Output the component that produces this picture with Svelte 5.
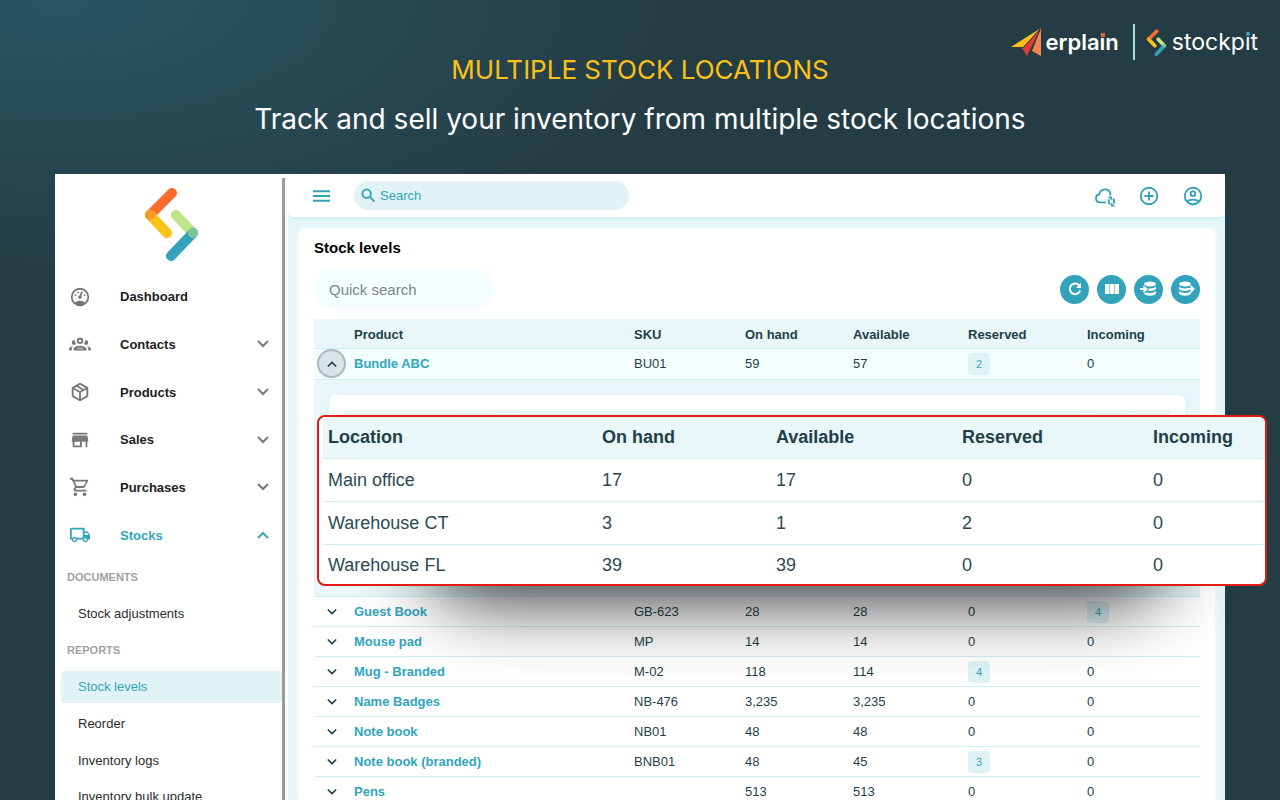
<script lang="ts">
  type Product = {
    name: string;
    sku: string;
    onHand: string;
    available: string;
    reserved: number;
    incoming: number;
    open?: boolean;
  };

  const icons = {
    gauge: 'M12 2A10 10 0 0 0 2 12A10 10 0 0 0 12 22A10 10 0 0 0 22 12A10 10 0 0 0 12 2M12 4A8 8 0 0 1 20 12C20 14.4 19 16.5 17.3 18C15.9 16.7 14 16 12 16C10 16 8.2 16.7 6.7 18C5 16.5 4 14.4 4 12A8 8 0 0 1 12 4M14 5.89C13.62 5.9 13.26 6.15 13.1 6.54L11.81 9.77L11.71 10C11 10.13 10.41 10.6 10.14 11.26C9.73 12.29 10.23 13.45 11.26 13.86C12.29 14.27 13.45 13.77 13.86 12.74C14.12 12.08 14 11.32 13.57 10.76L13.67 10.5L14.96 7.29C15.17 6.75 14.92 6.17 14.41 5.96C14.28 5.91 14.15 5.89 14 5.89M10 6A1 1 0 0 0 9 7A1 1 0 0 0 10 8A1 1 0 0 0 11 7A1 1 0 0 0 10 6M7 9A1 1 0 0 0 6 10A1 1 0 0 0 7 11A1 1 0 0 0 8 10A1 1 0 0 0 7 9M17 9A1 1 0 0 0 16 10A1 1 0 0 0 17 11A1 1 0 0 0 18 10A1 1 0 0 0 17 9Z',
    group: 'M12 5A3.5 3.5 0 0 0 8.5 8.5A3.5 3.5 0 0 0 12 12A3.5 3.5 0 0 0 15.5 8.5A3.5 3.5 0 0 0 12 5M12 7A1.5 1.5 0 0 1 13.5 8.5A1.5 1.5 0 0 1 12 10A1.5 1.5 0 0 1 10.5 8.5A1.5 1.5 0 0 1 12 7M5.5 8A2.5 2.5 0 0 0 3 10.5C3 11.44 3.53 12.25 4.29 12.68C4.65 12.88 5.06 13 5.5 13C5.94 13 6.35 12.88 6.71 12.68C7.08 12.47 7.39 12.17 7.62 11.81C6.89 10.86 6.5 9.7 6.5 8.5V8.22C6.2 8.08 5.86 8 5.5 8M18.5 8C18.14 8 17.8 8.08 17.5 8.22V8.5C17.5 9.7 17.11 10.86 16.38 11.81C16.5 12 16.63 12.15 16.78 12.3C16.94 12.45 17.1 12.58 17.29 12.68C17.65 12.88 18.06 13 18.5 13C18.94 13 19.35 12.88 19.71 12.68C20.47 12.25 21 11.44 21 10.5A2.5 2.5 0 0 0 18.5 8M12 14C9.66 14 5 15.17 5 17.5V19H19V17.5C19 15.17 14.34 14 12 14M4.71 14.55C2.78 14.78 0 15.76 0 17.5V19H3V17.07C3 16.06 3.69 15.22 4.71 14.55M19.29 14.55C20.31 15.22 21 16.06 21 17.07V19H24V17.5C24 15.76 21.22 14.78 19.29 14.55M12 16C13.53 16 15.24 16.5 16.23 17H7.77C8.76 16.5 10.47 16 12 16Z',
    box: 'M21 16.5C21 16.88 20.79 17.21 20.47 17.38L12.57 21.82C12.41 21.94 12.21 22 12 22C11.79 22 11.59 21.94 11.43 21.82L3.53 17.38C3.21 17.21 3 16.88 3 16.5V7.5C3 7.12 3.21 6.79 3.53 6.62L11.43 2.18C11.59 2.06 11.79 2 12 2C12.21 2 12.41 2.06 12.57 2.18L20.47 6.62C20.79 6.79 21 7.12 21 7.5V16.5M12 4.15L10.11 5.22L16 8.61L17.96 7.5L12 4.15M6.04 7.5L12 10.85L13.96 9.75L8.08 6.35L6.04 7.5M5 15.91L11 19.29V12.58L5 9.21V15.91M19 15.91V9.21L13 12.58V19.29L19 15.91Z',
    store: 'M12 18H6V14H12M21 14V12L20 7H4L3 12V14H4V20H14V14H18V20H20V14M20 4H4V6H20V4Z',
    cart: 'M17 18A2 2 0 0 1 19 20A2 2 0 0 1 17 22C15.89 22 15 21.1 15 20C15 18.89 15.89 18 17 18M1 2H4.27L5.21 4H20A1 1 0 0 1 21 5C21 5.17 20.95 5.34 20.88 5.5L17.3 11.97C16.96 12.58 16.3 13 15.55 13H8.1L7.2 14.63L7.17 14.75A0.25 0.25 0 0 0 7.42 15H19V17H7C5.89 17 5 16.1 5 15C5 14.65 5.09 14.32 5.24 14.04L6.6 11.59L3 4H1V2M7 18A2 2 0 0 1 9 20A2 2 0 0 1 7 22C5.89 22 5 21.1 5 20C5 18.89 5.89 18 7 18M16 11L18.78 6H6.14L8.5 11H16Z',
    truck: 'M18 18.5C18.83 18.5 19.5 17.83 19.5 17C19.5 16.17 18.83 15.5 18 15.5C17.17 15.5 16.5 16.17 16.5 17C16.5 17.83 17.17 18.5 18 18.5M19.5 9.5H17V12H21.46L19.5 9.5M6 18.5C6.83 18.5 7.5 17.83 7.5 17C7.5 16.17 6.83 15.5 6 15.5C5.17 15.5 4.5 16.17 4.5 17C4.5 17.83 5.17 18.5 6 18.5M20 8L23 12V17H21C21 18.66 19.66 20 18 20C16.34 20 15 18.66 15 17H9C9 18.66 7.66 20 6 20C4.34 20 3 18.66 3 17H1V6C1 4.89 1.89 4 3 4H17V8H20M3 6V15H3.76C4.31 14.39 5.11 14 6 14C6.89 14 7.69 14.39 8.24 15H15V6H3Z'
  };

  const menu = [
    { label: 'Dashboard', icon: icons.gauge, leaf: true },
    { label: 'Contacts', icon: icons.group },
    { label: 'Products', icon: icons.box },
    { label: 'Sales', icon: icons.store },
    { label: 'Purchases', icon: icons.cart },
    { label: 'Stocks', icon: icons.truck, active: true }
  ];

  const submenu = [
    { label: 'DOCUMENTS', heading: true },
    { label: 'Stock adjustments' },
    { label: 'REPORTS', heading: true },
    { label: 'Stock levels', active: true },
    { label: 'Reorder' },
    { label: 'Inventory logs' },
    { label: 'Inventory bulk update' }
  ];

  const locations = [
    ['Main office', 17, 17, 0, 0],
    ['Warehouse CT', 3, 1, 2, 0],
    ['Warehouse FL', 39, 39, 0, 0]
  ];

  let products: Product[] = $state([
    { name: 'Bundle ABC', sku: 'BU01', onHand: '59', available: '57', reserved: 2, incoming: 0, open: true },
    { name: 'Guest Book', sku: 'GB-623', onHand: '28', available: '28', reserved: 0, incoming: 4 },
    { name: 'Mouse pad', sku: 'MP', onHand: '14', available: '14', reserved: 0, incoming: 0 },
    { name: 'Mug - Branded', sku: 'M-02', onHand: '118', available: '114', reserved: 4, incoming: 0 },
    { name: 'Name Badges', sku: 'NB-476', onHand: '3,235', available: '3,235', reserved: 0, incoming: 0 },
    { name: 'Note book', sku: 'NB01', onHand: '48', available: '48', reserved: 0, incoming: 0 },
    { name: 'Note book (branded)', sku: 'BNB01', onHand: '48', available: '45', reserved: 3, incoming: 0 },
    { name: 'Pens', sku: '', onHand: '513', available: '513', reserved: 0, incoming: 0 }
  ]);
</script>

{#snippet mark()}
  <svg class="mark" viewBox="0 0 57 74" fill="none" stroke-width="10" stroke-linecap="round" aria-hidden="true">
    <path d="M29 6 7 28" stroke="#fb6a2f" />
    <path d="M7 28 24 46" stroke="#fac31a" />
    <path d="M33 28 50 46" stroke="#c1e58a" />
    <path d="M50 46 28 69" stroke="#35a1bb" />
    <circle cx="7" cy="28" r="5" fill="#fb9a26" />
    <circle cx="50" cy="46" r="5" fill="#7cc3a0" />
  </svg>
{/snippet}

{#snippet chevron(up: boolean | undefined)}
  <svg class="chevron" viewBox="0 0 12 12" fill="none" stroke="currentColor" stroke-width="2" aria-hidden="true">
    <path d={up ? 'M1 9 6 4l5 5' : 'M1 3l5 5 5-5'} />
  </svg>
{/snippet}

{#snippet qty(n: number)}
  {#if n}<span class="badge">{n}</span>{:else}0{/if}
{/snippet}

<div class="page">
  <header class="hero">
    <div class="headline">
      <h1>MULTIPLE STOCK LOCATIONS</h1>
      <p>Track and sell your inventory from multiple stock locations</p>
    </div>
    <div class="brands">
      <svg class="plane" viewBox="0 0 30 28" aria-hidden="true">
        <path d="M0 19 30 0 14 19Z" fill="#fcc016" />
        <path d="M30 0 11 20l5 8Z" fill="#df3e30" />
        <path d="M30 0 21 23l9 5Z" fill="#f58653" />
        <path d="M29 1 12 20M29 2 18 26" stroke="#243c44" fill="none" />
      </svg>
      <span class="erplain">erpla<span class="dotted">i</span>n</span>
      <span class="divider"></span>
      {@render mark()}
      <span class="stockpit">stockp<span class="dotted">i</span>t</span>
    </div>
  </header>

  <div class="app">
    <aside class="sidebar">
      <div class="side-scroll">
        <div class="logo">{@render mark()}</div>
        <nav class="menu" aria-label="Main">
          {#each menu as item}
            <button class="menu-item" class:active={item.active}>
              <svg class="icon" viewBox="0 0 24 24" fill="currentColor" aria-hidden="true"><path d={item.icon} /></svg>
              <span>{item.label}</span>
              {#if !item.leaf}{@render chevron(item.active)}{/if}
            </button>
          {/each}
        </nav>
        <nav class="submenu" aria-label="Stocks">
          {#each submenu as item}
            {#if item.heading}
              <h3>{item.label}</h3>
            {:else}
              <a href="#stocks" class:active={item.active}>{item.label}</a>
            {/if}
          {/each}
        </nav>
      </div>
      <div class="scrollbar"></div>
    </aside>

    <main>
      <div class="topbar">
        <button class="plain" aria-label="Toggle menu">
          <svg class="burger" viewBox="0 0 18 14" fill="none" stroke="currentColor" stroke-width="2" aria-hidden="true">
            <path d="M0 2h18M0 7h18M0 12h18" />
          </svg>
        </button>
        <div class="search">
          <svg viewBox="0 0 16 16" fill="none" stroke="currentColor" stroke-width="2" aria-hidden="true">
            <circle cx="6" cy="6" r="4.5" /><path d="m9.5 9.5 5 5" />
          </svg>
          <input type="text" aria-label="Search" placeholder="Search" />
        </div>
        <div class="top-actions">
          <button class="plain" aria-label="Sync">
            <svg class="icon" viewBox="0 0 24 24" fill="none" stroke="currentColor" stroke-width="2" aria-hidden="true">
              <path d="M13 19H6.5A4.5 4.5 0 0 1 5.8 10.1A6.2 6.2 0 0 1 17.8 9V11.5" />
              <path d="M17.5 21A3.5 3.5 0 0 1 17 15.5M20.5 15A3.5 3.5 0 0 1 21 20.5" />
              <path d="M15 12.5h4.5V17ZM23 23.5h-4.5V19Z" fill="currentColor" stroke="none" />
            </svg>
          </button>
          <button class="plain" aria-label="Add">
            <svg class="icon" viewBox="0 0 24 24" fill="none" stroke="currentColor" stroke-width="2" aria-hidden="true">
              <circle cx="12" cy="12" r="9" /><path d="M12 7v10M7 12h10" />
            </svg>
          </button>
          <button class="plain" aria-label="Account">
            <svg class="icon" viewBox="0 0 24 24" fill="none" stroke="currentColor" stroke-width="2" aria-hidden="true">
              <circle cx="12" cy="12" r="9" /><circle cx="12" cy="9.5" r="2.5" />
              <path d="M5.5 18C8.5 15.2 15.5 15.2 18.5 18" />
            </svg>
          </button>
        </div>
      </div>

      <section class="card">
        <h2>Stock levels</h2>
        <div class="tools">
          <input class="quick" type="text" aria-label="Quick search" placeholder="Quick search" />
          <div class="round-buttons">
            <button aria-label="Refresh">
              <svg viewBox="0 0 18 18" fill="none" stroke="currentColor" stroke-width="2" aria-hidden="true">
                <path d="M13 5.2A5.3 5.3 0 1 0 14.2 10.5" />
                <path d="M15 3v5h-5Z" fill="currentColor" stroke="none" />
              </svg>
            </button>
            <button aria-label="Columns">
              <svg viewBox="0 0 18 18" fill="currentColor" aria-hidden="true">
                <path d="M2 4h14v10H2Z" />
                <path d="M6.5 4v10M11.5 4v10" stroke="#8fccd9" />
              </svg>
            </button>
            <button aria-label="Import">
              <svg viewBox="0 0 18 18" fill="currentColor" aria-hidden="true">
                <ellipse cx="10" cy="4" rx="6" ry="2.5" />
                <path d="M4 6.5C6 9 14 9 16 6.5V9C14 11.5 6 11.5 4 9ZM4 11C6 13.5 14 13.5 16 11V13.5C14 16.5 6 16.5 4 13.5Z" />
                <path d="M0 9h6M3.5 6 6.5 9 3.5 12" fill="none" stroke="#33a3bc" stroke-width="4" />
                <path d="M0 9h6M3.5 6 6.5 9 3.5 12" fill="none" stroke="currentColor" stroke-width="2" />
              </svg>
            </button>
            <button aria-label="Export">
              <svg viewBox="0 0 18 18" fill="currentColor" aria-hidden="true">
                <ellipse cx="8" cy="4" rx="6" ry="2.5" />
                <path d="M2 6.5C4 9 12 9 14 6.5V9C12 11.5 4 11.5 2 9ZM2 11C4 13.5 12 13.5 14 11V13.5C12 16.5 4 16.5 2 13.5Z" />
                <path d="M11 9h5M13.5 6 16.5 9 13.5 12" fill="none" stroke="#33a3bc" stroke-width="4" />
                <path d="M11 9h5M13.5 6 16.5 9 13.5 12" fill="none" stroke="currentColor" stroke-width="2" />
              </svg>
            </button>
          </div>
        </div>

        <table class="stock">
          <colgroup>
            <col class="c-toggle" /><col /><col class="c-sku" /><col class="c-hand" />
            <col class="c-avail" /><col class="c-res" /><col class="c-inc" />
          </colgroup>
          <thead>
            <tr>
              <th aria-label="Expand"></th><th>Product</th><th>SKU</th><th>On hand</th>
              <th>Available</th><th>Reserved</th><th>Incoming</th>
            </tr>
          </thead>
          <tbody>
            {#each products as product}
              <tr class:open={product.open}>
                <td>
                  <button class="toggle" aria-label="Toggle {product.name}" onclick={() => (product.open = !product.open)}>
                    {@render chevron(product.open)}
                  </button>
                </td>
                <td><a href="#product">{product.name}</a></td>
                <td>{product.sku}</td>
                <td>{product.onHand}</td>
                <td>{product.available}</td>
                <td>{@render qty(product.reserved)}</td>
                <td>{@render qty(product.incoming)}</td>
              </tr>
              {#if product.open}
                <tr class="detail">
                  <td colspan="7">
                    <div class="detail-body">
                      <div class="detail-card"><div class="detail-head"></div></div>
                      <div class="popup-shadow"></div>
                      <div class="popup">
                        <table>
                          <colgroup>
                            <col /><col class="p-hand" /><col class="p-avail" /><col class="p-res" /><col class="p-inc" />
                          </colgroup>
                          <thead>
                            <tr><th>Location</th><th>On hand</th><th>Available</th><th>Reserved</th><th>Incoming</th></tr>
                          </thead>
                          <tbody>
                            {#each locations as row}
                              <tr>{#each row as cell}<td>{cell}</td>{/each}</tr>
                            {/each}
                          </tbody>
                        </table>
                      </div>
                    </div>
                  </td>
                </tr>
              {/if}
            {/each}
          </tbody>
        </table>
      </section>
    </main>
  </div>
</div>

<style>
  :global(body) { margin: 0; }
  .page {
    height: 100vh;
    overflow: hidden;
    display: flex;
    flex-direction: column;
    font-family: 'Liberation Sans', Arial, sans-serif;
    font-size: 13px;
    color: #1f3f49;
    background: radial-gradient(ellipse 640px 280px at 60px 0, #2a5563, #243c44) #243c44;
  }
  * { box-sizing: border-box; }
  h1, h2, h3, p { margin: 0; font-weight: 400; }
  button { border: 0; padding: 0; background: none; font: inherit; color: inherit; cursor: pointer; }
  a { color: inherit; text-decoration: none; }
  svg { display: block; flex: none; }
  table { width: 100%; table-layout: fixed; border-collapse: separate; border-spacing: 0; }
  th { text-align: left; }
  th, td { padding: 0; }

  .hero { display: grid; flex: none; height: 174px; }
  .headline, .brands { grid-area: 1 / 1; }
  .headline {
    padding-top: 50px;
    text-align: center;
    font-family: Inter, 'Open Sans', sans-serif;
    line-height: 40px;
    color: #fff;
  }
  h1 { font-size: 26px; color: #fcc016; }
  .headline p { margin-top: 9px; font-size: 28px; }
  .brands {
    display: flex;
    align-items: center;
    align-self: start;
    justify-self: end;
    height: 38px;
    margin: 23px 22px 0 0;
    color: #fff;
  }
  .plane { width: 30px; height: 28px; }
  .erplain { margin-left: 5px; font: 600 22px/28px Inter, sans-serif; }
  .divider { width: 2px; height: 36px; margin: 0 11px 0 14px; background: #a5dfe4; }
  .brands .mark { width: 21px; height: 27px; }
  .stockpit { margin-left: 5px; font: 400 23px/28px Inter, sans-serif; }
  .dotted { position: relative; }
  .dotted::after {
    content: '';
    position: absolute;
    left: 1px;
    top: 4px;
    width: 4px;
    height: 4px;
    background: #f0592f;
  }
  .stockpit .dotted::after { border-radius: 2px; background: #35a1bb; }

  .app { display: flex; flex: 1; min-height: 0; margin: 0 55px; background: #fff; }
  .sidebar { display: flex; flex: none; width: 233px; padding-right: 3px; }
  .side-scroll { flex: 1; overflow: hidden; }
  .scrollbar { width: 3px; margin-top: 4px; background: #9b9b9b; }
  .logo { display: flex; justify-content: center; padding: 13px 0 12px 6px; }
  .logo .mark { width: 57px; height: 74px; }
  .menu { display: grid; grid-auto-rows: 1fr; height: 286px; }
  .menu-item {
    display: grid;
    grid-template-columns: 51px 1fr 12px;
    align-items: center;
    padding: 0 13px 0 14px;
    text-align: left;
    font-weight: 700;
    color: #222;
  }
  .icon { width: 22px; height: 22px; }
  .menu-item svg { color: #777; }
  .menu-item.active, .menu-item.active svg { color: #32a5bd; }
  .chevron { width: 12px; height: 12px; }
  .submenu { display: grid; grid-auto-rows: 1fr; gap: 4px; height: 252px; margin-top: 2px; padding: 0 0 0 6px; }
  .submenu h3, .submenu a { display: flex; align-items: center; }
  .submenu h3 { padding-left: 6px; font-size: 11px; font-weight: 700; color: #a2a2a2; }
  .submenu a { padding-left: 17px; border-radius: 4px; color: #2b2b2b; }
  .submenu a.active { background: #e1f3f6; color: #32a5bd; }

  main { flex: 1; min-width: 0; display: flex; flex-direction: column; background: #e4f6fa; }
  .topbar {
    display: flex;
    align-items: center;
    flex: none;
    height: 43px;
    padding: 0 21px 0 25px;
    border-radius: 0 0 6px 6px;
    background: #fff;
    box-shadow: 0 5px 5px -4px #bfe6ef;
    color: #32a1b9;
  }
  .burger { width: 17px; height: 14px; }
  .search {
    display: flex;
    align-items: center;
    width: 275px;
    height: 29px;
    margin-left: 24px;
    padding-left: 7px;
    border-radius: 15px;
    background: #e1f3f6;
  }
  .search svg { width: 15px; height: 15px; }
  .search input { flex: 1; min-width: 0; padding: 0 0 0 4px; border: 0; outline: 0; background: none; font: inherit; }
  .search input::placeholder { color: #32a5bd; opacity: 1; }
  .top-actions { display: flex; gap: 22px; margin-left: auto; }

  .card {
    flex: 1;
    min-height: 0;
    margin: 11px 10px 0 11px;
    padding: 10px 15px 0;
    border-radius: 6px 6px 0 0;
    background: #fff;
    box-shadow: 0 0 6px #fafeff;
  }
  h2 { font-size: 15px; line-height: 20px; font-weight: 700; color: #000; }
  .tools { display: flex; align-items: center; justify-content: space-between; margin: 10px 0 9px; }
  .quick {
    width: 180px;
    height: 42px;
    padding: 0 15px;
    border: 0;
    border-radius: 21px;
    outline: 0;
    background: #f4fdff;
    font: inherit;
    font-size: 15px;
  }
  .quick::placeholder { color: #808686; opacity: 1; }
  .round-buttons { display: flex; gap: 8px; }
  .round-buttons button {
    display: grid;
    place-items: center;
    width: 29px;
    height: 29px;
    border-radius: 50%;
    background: #33a3bc;
    color: #fff;
  }
  .round-buttons svg { width: 18px; height: 18px; }

  .c-toggle { width: 40px; }
  .c-sku { width: 111px; }
  .c-hand { width: 108px; }
  .c-avail { width: 115px; }
  .c-res { width: 119px; }
  .c-inc { width: 113px; }
  .stock th, .stock td { height: 30px; border-bottom: 1px solid #d0eff5; }
  .stock th { padding-top: 1px; background: #e9f7f9; }
  .stock .open td { height: 31px; padding-bottom: 1px; background: #f4fdff; }
  .stock td a { font-weight: 700; color: #32a5bd; }
  .toggle {
    display: grid;
    place-items: center;
    width: 29px;
    height: 29px;
    margin-left: 3px;
    border-radius: 50%;
  }
  .toggle .chevron { width: 10px; height: 10px; }
  .open .toggle { border: 2px solid #a9b9bf; background: #d9e3e8; }
  .badge {
    display: block;
    width: 22px;
    border-radius: 4px;
    background: #dff3f7;
    font-size: 11px;
    line-height: 22px;
    text-align: center;
    color: #32a5bd;
  }

  .stock .detail > td { height: 217px; background: #e9f7f9; vertical-align: top; }
  .detail-body { position: relative; padding: 15px; }
  .detail-card { height: 186px; padding: 15px; border-radius: 6px; background: #fff; box-shadow: 0 0 6px #d6f1fa; }
  .detail-head { height: 30px; background: #e9f7f9; }
  .popup-shadow {
    position: absolute;
    top: 110px;
    left: 110px;
    right: 30px;
    height: 110px;
    border-radius: 55px;
    background: #000;
    opacity: 0.8;
    filter: blur(38px);
    pointer-events: none;
  }
  .popup {
    position: absolute;
    z-index: 2;
    top: 35px;
    left: 3px;
    right: -67px;
    padding-left: 4px;
    border: 2px solid #e21b14;
    border-radius: 8px;
    background: #fff;
    font-size: 18px;
  }
  .popup th { height: 42px; padding: 0 0 0 5px; }
  .popup td { height: 43px; padding: 1px 0 0 5px; color: #2c4a54; }
  .popup th:last-child { border-radius: 0 6px 0 0; }
  .popup tr:last-child td { height: 39px; border-bottom: 0; }
  .p-hand { width: 174px; }
  .p-avail { width: 186px; }
  .p-res { width: 191px; }
  .p-inc { width: 117px; }
</style>
